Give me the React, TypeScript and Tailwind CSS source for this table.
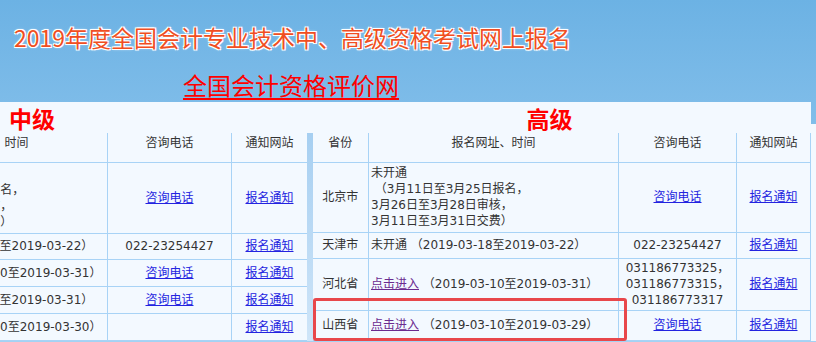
import React from "react";

const cjk = "font-['DejaVu_Sans','Noto_Sans_CJK_SC',sans-serif]";
const cell = "border border-[#a8d3f6] text-[12px] leading-[16px] text-[#333]";
const link = "text-[#2323e0] underline";
const visited = "text-[#6b2b8f] underline";

function Phone({ v }: { v: string }) {
  if (v === "link") return <a className={link}>咨询电话</a>;
  return <span>{v}</span>;
}

// 中级：左边被滚动裁掉一截
const zhongRows = [
  { h: "h-[71px]", time: ["未开通", "（3月1日至3月25日报名，", "3月26日至4月8日审核，", "3月1日至3月31日交费）"], phone: "link" },
  { h: "h-[26px]", time: ["未开通 （2019-03-18至2019-03-22）"], phone: "022-23254427" },
  { h: "h-[27px]", time: ["点击进入（2019-03-10至2019-03-31）"], phone: "link" },
  { h: "h-[27px]", time: ["未开通 （2019-03-11至2019-03-31）"], phone: "link" },
  { h: "h-[27px]", time: ["点击进入（2019-03-10至2019-03-30）"], phone: "" },
];

export default function App() {
  return (
    <div className={`relative w-[816px] h-[342px] overflow-hidden bg-linear-to-b from-[#6cb2e4] to-[#a4d2f3] ${cjk}`}>
      {/* 顶部标题 */}
      <div className="h-[102px]">
        <div className="pt-[22px] pl-[14px] text-[23px] leading-[30px] text-[#f04e22] font-['Noto_Sans_CJK_SC',sans-serif] [text-shadow:1px_1px_0_#fff,-1px_-1px_0_#fff,1px_-1px_0_#fff,-1px_1px_0_#fff,0_0_3px_#fff]">
          2019年度全国会计专业技术中、高级资格考试网上报名
        </div>
        <div className="pt-[19px] pl-[183px] text-[24px] leading-[28px] font-['Noto_Sans_CJK_SC',sans-serif]">
          <a className="text-[#ff0000] underline decoration-2 underline-offset-[3px]">全国会计资格评价网</a>
        </div>
      </div>

      <div className="flex">
        {/* 中级 */}
        <div className="w-[307px] bg-[#f3f9ff] overflow-hidden">
          <div className="h-[31px] pl-[9px] pt-[3px] text-[23px] leading-[26px] font-bold text-[#ff0000] font-['Noto_Sans_CJK_SC',sans-serif]">
            中级
          </div>
          <table className="table-fixed border-collapse -ml-[181px] w-[488px]">
            <colgroup>
              <col className="w-[56px]" />
              <col className="w-[232px]" />
              <col className="w-[124px]" />
              <col className="w-[76px]" />
            </colgroup>
            <thead>
              <tr>
                <td className={`${cell} border-t-0 h-[29px] align-top pt-[2px] text-center`}>省份</td>
                <td className={`${cell} border-t-0 align-top pt-[2px] pr-[10px] text-center`}>报名网址、时间</td>
                <td className={`${cell} border-t-0 align-top pt-[2px] text-center`}>咨询电话</td>
                <td className={`${cell} border-t-0 align-top pt-[2px] text-center`}>通知网站</td>
              </tr>
            </thead>
            <tbody>
              {zhongRows.map((r, i) => (
                <tr key={i}>
                  <td className={`${cell} ${r.h} text-center`}>省</td>
                  <td className={`${cell} px-[2px] whitespace-pre`}>
                    {r.time.map((t, j) => (
                      <div key={j}>{t}</div>
                    ))}
                  </td>
                  <td className={`${cell} text-center`}>{r.phone && <Phone v={r.phone} />}</td>
                  <td className={`${cell} text-center`}>
                    <a className={link}>报名通知</a>
                  </td>
                </tr>
              ))}
            </tbody>
          </table>
        </div>

        {/* 分隔条 */}
        <div className="w-[6px] flex flex-col">
          <div className="h-[31px] bg-[#f3f9ff]" />
          <div className="flex-1 bg-linear-to-b from-[#a6cff1] to-[#cfe5f8]" />
        </div>

        {/* 高级 */}
        <div className="flex-1">
          <div className="flex h-[31px]">
            <div className="flex-1 bg-[#f3f9ff] pl-[214px] pt-[3px] text-[23px] leading-[26px] font-bold text-[#ff0000] font-['Noto_Sans_CJK_SC',sans-serif]">
              高级
            </div>
            <div className="w-[5px] flex flex-col">
              <div className="h-[22px]" />
              <div className="flex-1 bg-[#f3f9ff]" />
            </div>
          </div>
          <div className="bg-[#f3f9ff] pr-[5px]">
            <table className="table-fixed border-collapse w-[498px]">
              <colgroup>
                <col className="w-[56px]" />
                <col className="w-[250px]" />
                <col className="w-[118px]" />
                <col className="w-[74px]" />
              </colgroup>
              <thead>
                <tr>
                  <td className={`${cell} border-t-0 border-l-0 h-[29px] align-top pt-[2px] text-center`}>省份</td>
                  <td className={`${cell} border-t-0 align-top pt-[2px] text-center`}>报名网址、时间</td>
                  <td className={`${cell} border-t-0 align-top pt-[2px] text-center`}>咨询电话</td>
                  <td className={`${cell} border-t-0 align-top pt-[2px] text-center`}>通知网站</td>
                </tr>
              </thead>
              <tbody>
                <tr>
                  <td className={`${cell} border-l-0 h-[70px] text-center`}>北京市</td>
                  <td className={`${cell} px-[2px] whitespace-pre`}>
                    <div>未开通</div>
                    <div>{"\u00a0（3月11日至3月25日报名，"}</div>
                    <div>3月26日至3月28日审核，</div>
                    <div>3月11日至3月31日交费）</div>
                  </td>
                  <td className={`${cell} text-center`}>
                    <a className={link}>咨询电话</a>
                  </td>
                  <td className={`${cell} text-center`}>
                    <a className={link}>报名通知</a>
                  </td>
                </tr>
                <tr>
                  <td className={`${cell} border-l-0 h-[26px] text-center`}>天津市</td>
                  <td className={`${cell} px-[2px] whitespace-pre`}>未开通 （2019-03-18至2019-03-22）</td>
                  <td className={`${cell} text-center`}>022-23254427</td>
                  <td className={`${cell} text-center`}>
                    <a className={link}>报名通知</a>
                  </td>
                </tr>
                <tr>
                  <td className={`${cell} border-l-0 h-[52px] text-center`}>河北省</td>
                  <td className={`${cell} px-[2px] whitespace-pre`}>
                    <a className={visited}>点击进入</a> （2019-03-10至2019-03-31）
                  </td>
                  <td className={`${cell} text-center`}>
                    <div>031186773325，</div>
                    <div>031186773315，</div>
                    <div>031186773317</div>
                  </td>
                  <td className={`${cell} text-center`}>
                    <a className={link}>报名通知</a>
                  </td>
                </tr>
                <tr>
                  <td className={`${cell} border-l-0 h-[30px] text-center`}>山西省</td>
                  <td className={`${cell} px-[2px] whitespace-pre`}>
                    <a className={visited}>点击进入</a> （2019-03-10至2019-03-29）
                  </td>
                  <td className={`${cell} text-center`}>
                    <a className={link}>咨询电话</a>
                  </td>
                  <td className={`${cell} text-center`}>
                    <a className={link}>报名通知</a>
                  </td>
                </tr>
              </tbody>
            </table>
          </div>
        </div>
      </div>

      {/* 红色标注框 */}
      <div className="absolute left-[313px] top-[298px] w-[314px] h-[43px] border-[3px] border-[#e8474b] rounded-[3px]" />
    </div>
  );
}
